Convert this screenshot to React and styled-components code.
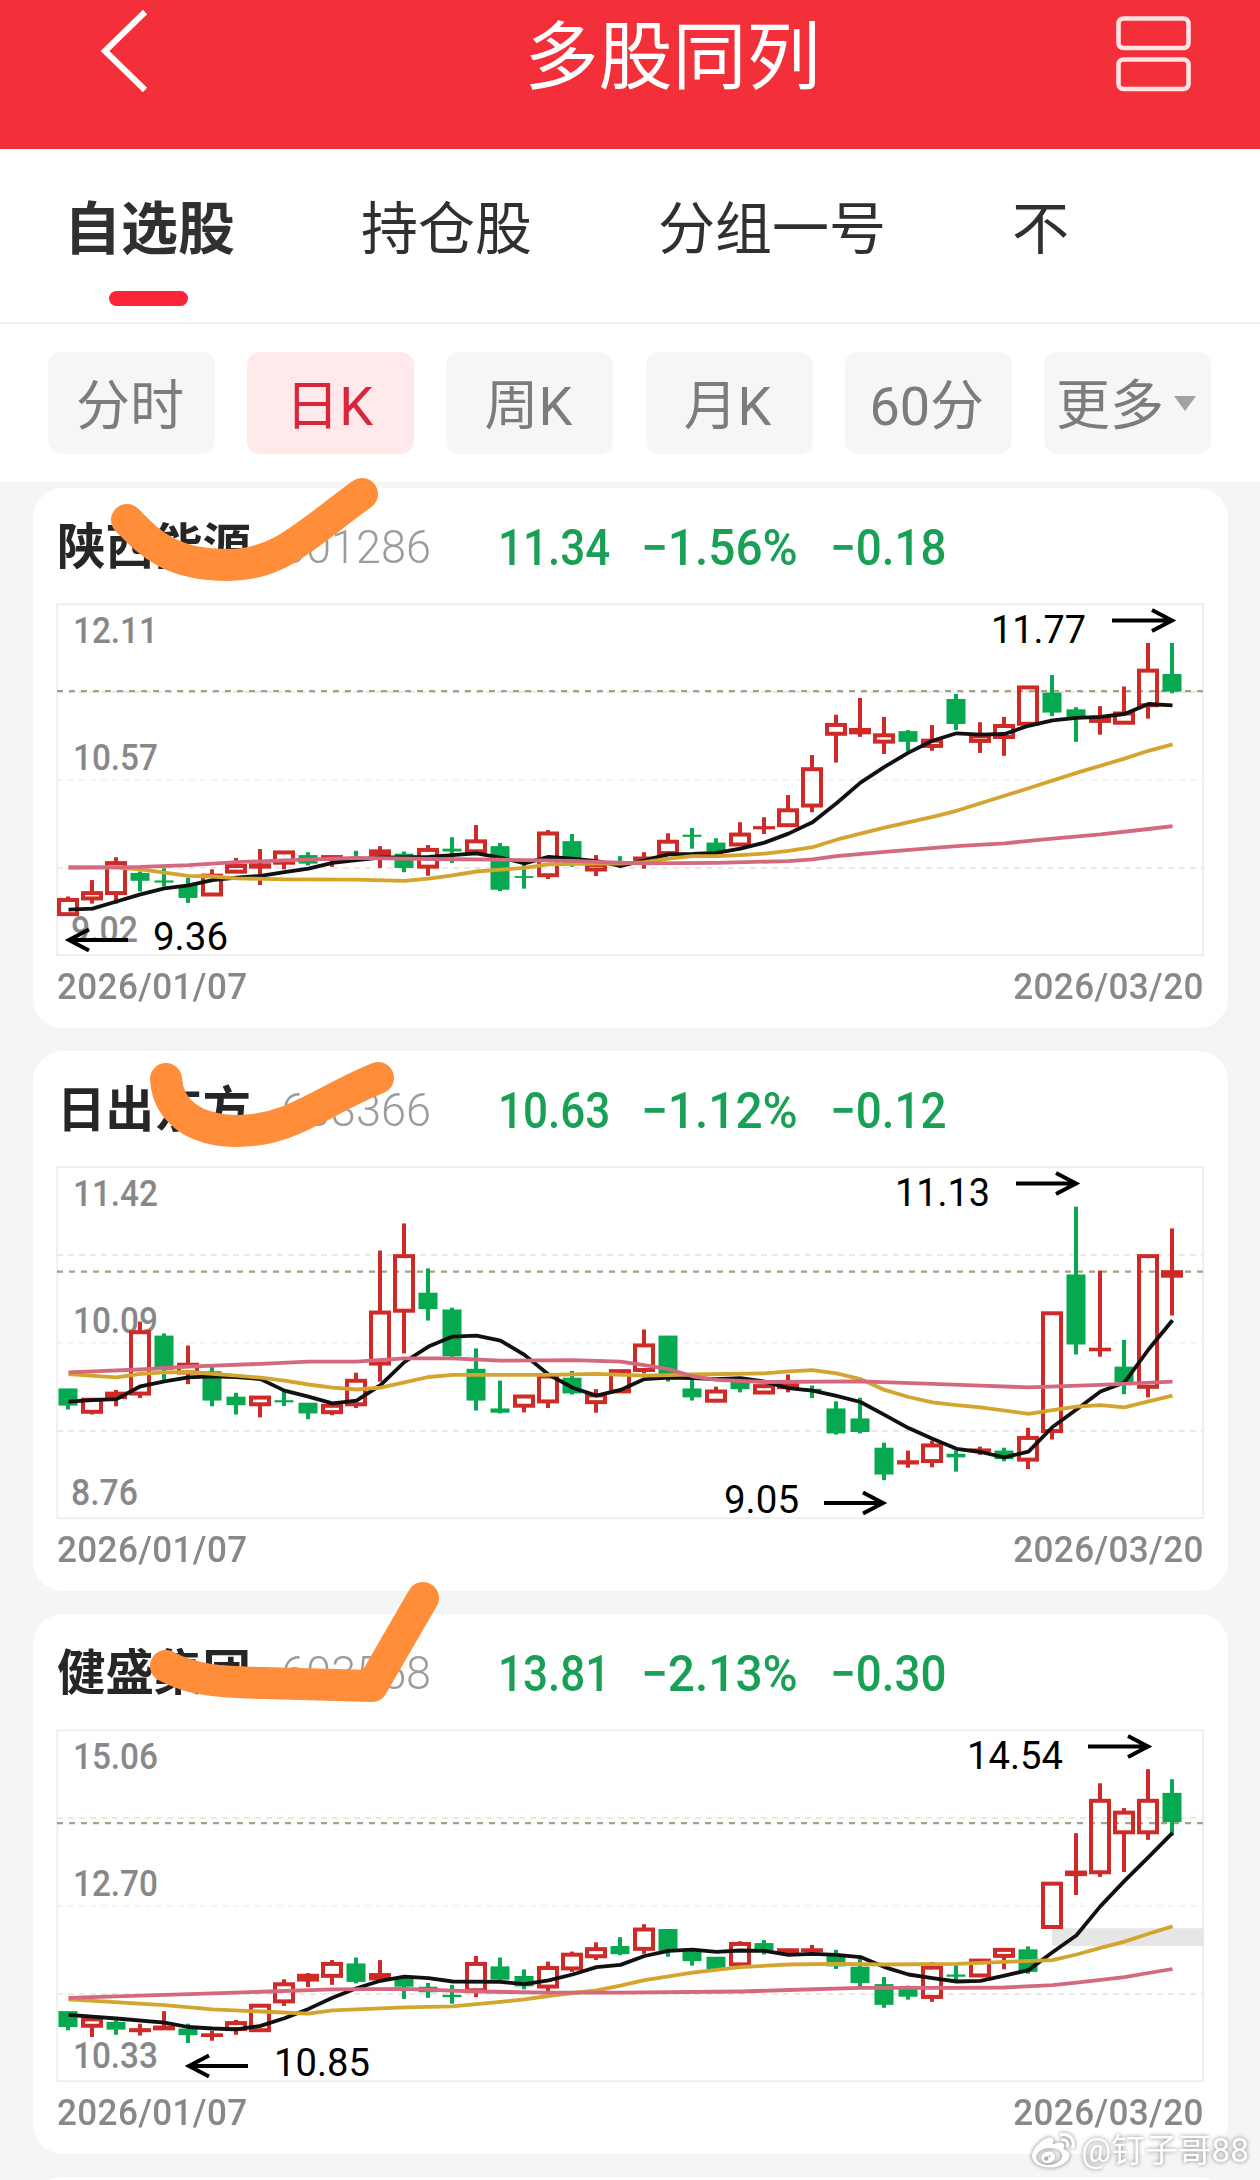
import React from 'react'
import styled, { createGlobalStyle } from 'styled-components';
import { FaWeibo } from 'react-icons/fa';

const TABS = ['自选股', '持仓股', '分组一号', '不'];
const PERIODS = ['分时', '日K', '周K', '月K', '60分', '更多'];

// candles: [u(up) / d(down), body top, body bottom, high, low]
// averages: [day index, value]
const STOCKS = [
  {
    name: '陕西能源', code: '001286', price: '11.34', rate: '−1.56%', diff: '−0.18',
    base: 347, unit: 2.8, last: 591,
    axis: ['12.11', '10.57', '9.02'],
    scribble: 'M94 31C115 52 135 76 195 76C246 76 270 48 329 5',
    marks: [
      { text: '11.77', x: 934, y: 39, w: 95, from: 1055, to: 1115, ay: 16.5 },
      { text: '9.36', x: 96, y: 346, w: 75, from: 71, to: 12, ay: 336 },
    ],
    candles: [
      ['u', 1170, 1221, 1166, 1221], ['u', 1151, 1177, 1120, 1186], ['u', 1067, 1162, 1056, 1186],
      ['d', 1100, 1122, 1096, 1152], ['d', 1121, 1127, 1087, 1138], ['d', 1134, 1170, 1113, 1184],
      ['u', 1102, 1166, 1090, 1166], ['u', 1075, 1102, 1058, 1102], ['u', 1073, 1088, 1033, 1134],
      ['u', 1037, 1077, 1037, 1090], ['d', 1050, 1074, 1042, 1079], ['u', 1050, 1066, 1050, 1083],
      ['d', 1055, 1059, 1038, 1062], ['u', 1034, 1056, 1025, 1086], ['d', 1046, 1086, 1040, 1098],
      ['u', 1030, 1088, 1022, 1108], ['d', 1032, 1040, 1000, 1072], ['u', 1006, 1045, 966, 1050],
      ['d', 1025, 1147, 1016, 1151], ['d', 1109, 1114, 1077, 1144], ['u', 984, 1112, 980, 1117],
      ['d', 1011, 1078, 991, 1083], ['u', 1072, 1096, 1050, 1109], ['d', 1068, 1074, 1053, 1086],
      ['u', 1054, 1066, 1042, 1088], ['u', 1007, 1050, 989, 1050], ['d', 993, 999, 974, 1032],
      ['d', 1015, 1040, 1003, 1046], ['u', 987, 1026, 958, 1026], ['u', 969, 978, 944, 991],
      ['u', 919, 972, 882, 972], ['u', 804, 917, 770, 930], ['u', 680, 716, 657, 791],
      ['u', 694, 712, 610, 719], ['u', 709, 738, 663, 767], ['d', 703, 733, 700, 760],
      ['u', 724, 750, 686, 758], ['d', 613, 683, 599, 700], ['u', 712, 736, 678, 764],
      ['u', 683, 725, 663, 772], ['u', 575, 688, 575, 688], ['d', 595, 651, 546, 661],
      ['d', 642, 668, 636, 733], ['u', 662, 680, 633, 713], ['u', 648, 685, 578, 685],
      ['u', 528, 636, 456, 668], ['d', 543, 592, 456, 597],
    ],
    short: [[0, 1203], [1, 1200], [2, 1180], [3, 1160], [4, 1143], [5, 1135], [6, 1120], [7, 1113], [8, 1108], [9, 1098], [10, 1088], [11, 1072], [12, 1064], [13, 1057], [15, 1055], [16, 1050], [17, 1045], [18, 1057], [19, 1073], [20, 1055], [21, 1060], [22, 1067], [23, 1080], [24, 1065], [25, 1048], [26, 1047], [27, 1044], [28, 1032], [29, 1015], [30, 990], [31, 958], [32, 905], [33, 847], [34, 803], [35, 763], [36, 730], [37, 709], [38, 713], [39, 711], [40, 688], [41, 673], [42, 666], [43, 663], [44, 655], [45, 627], [46, 631]],
    mid: [[0, 1083], [2, 1085], [3, 1090], [4, 1099], [5, 1108], [6, 1110], [7, 1115], [9, 1118], [12, 1119], [14, 1122], [15, 1116], [16, 1107], [17, 1096], [18, 1091], [19, 1086], [20, 1076], [22, 1074], [23, 1074], [24, 1070], [25, 1060], [26, 1053], [27, 1053], [28, 1050], [29, 1046], [30, 1038], [31, 1028], [32, 1007], [34, 973], [36, 943], [37, 926], [39, 884], [40, 863], [42, 820], [44, 780], [45, 758], [46, 740]],
    long: [[0, 1086], [3, 1083], [5, 1078], [7, 1070], [9, 1065], [12, 1058], [15, 1061], [18, 1063], [21, 1066], [22, 1069], [24, 1073], [27, 1072], [30, 1067], [31, 1062], [32, 1053], [34, 1041], [37, 1025], [39, 1017], [41, 1004], [43, 992], [45, 977], [46, 969]],
  },
  {
    name: '日出东方', code: '603366', price: '10.63', rate: '−1.12%', diff: '−0.12',
    base: 354, unit: 2.8, last: 647,
    axis: ['11.42', '10.09', '8.76'],
    scribble: 'M133 27C135 58 160 79 205 79C258 79 290 48 345 26',
    marks: [
      { text: '11.13', x: 838, y: 39, w: 95, from: 959, to: 1019, ay: 16.5 },
      { text: '9.05', x: 667, y: 346, w: 75, from: 767, to: 826, ay: 336 },
    ],
    candles: [
      ['d', 974, 1022, 974, 1033], ['u', 1000, 1045, 1000, 1047], ['u', 983, 1004, 978, 1024],
      ['u', 811, 994, 787, 1001], ['d', 826, 922, 820, 950], ['u', 902, 935, 854, 962],
      ['d', 926, 1008, 912, 1024], ['d', 997, 1021, 986, 1047], ['u', 994, 1024, 994, 1055],
      ['d', 1007, 1013, 981, 1023], ['d', 1014, 1044, 1014, 1060], ['u', 1017, 1046, 1017, 1049],
      ['u', 947, 1024, 930, 1029], ['u', 756, 910, 588, 955], ['u', 598, 762, 512, 876],
      ['d', 706, 752, 638, 784], ['d', 753, 884, 748, 890], ['d', 919, 1008, 862, 1036],
      ['d', 1030, 1042, 952, 1044], ['u', 991, 1028, 991, 1041], ['u', 935, 1016, 932, 1029],
      ['d', 944, 988, 925, 991], ['u', 988, 1018, 976, 1042], ['u', 920, 988, 920, 988],
      ['u', 848, 928, 809, 932], ['d', 826, 948, 826, 955], ['d', 974, 999, 948, 1008],
      ['u', 977, 1014, 969, 1014], ['d', 956, 976, 950, 985], ['u', 962, 991, 962, 991],
      ['u', 958, 976, 935, 985], ['d', 975, 982, 966, 1001], ['d', 1030, 1100, 1010, 1103],
      ['d', 1058, 1096, 1000, 1100], ['d', 1140, 1215, 1126, 1231], ['u', 1175, 1187, 1148, 1196],
      ['u', 1128, 1183, 1120, 1195], ['d', 1157, 1167, 1148, 1207], ['u', 1142, 1152, 1137, 1160],
      ['d', 1148, 1172, 1140, 1178], ['u', 1107, 1179, 1084, 1200], ['u', 758, 1099, 758, 1117],
      ['d', 655, 851, 465, 879], ['u', 860, 870, 644, 885], ['d', 913, 957, 838, 990],
      ['u', 598, 975, 598, 999], ['u', 643, 664, 526, 770],
    ],
    short: [[0, 1011], [1, 1007], [2, 1004], [3, 968], [4, 954], [5, 943], [6, 940], [7, 942], [8, 948], [9, 980], [10, 997], [11, 1016], [12, 1008], [13, 965], [14, 900], [15, 857], [16, 829], [17, 826], [18, 840], [19, 880], [20, 935], [21, 972], [22, 994], [23, 978], [24, 948], [25, 944], [26, 945], [27, 948], [28, 945], [29, 955], [30, 973], [31, 980], [32, 995], [33, 1012], [34, 1048], [35, 1085], [36, 1115], [37, 1143], [38, 1152], [39, 1167], [40, 1151], [41, 1082], [42, 1033], [43, 983], [44, 957], [45, 865], [46, 783]],
    mid: [[0, 934], [2, 943], [3, 933], [4, 929], [5, 928], [7, 938], [8, 944], [9, 952], [10, 963], [11, 972], [12, 977], [13, 972], [14, 957], [15, 942], [16, 936], [20, 936], [22, 933], [24, 938], [26, 935], [29, 932], [30, 926], [31, 923], [32, 932], [33, 948], [34, 978], [35, 998], [36, 1013], [37, 1021], [38, 1027], [40, 1045], [41, 1035], [42, 1025], [43, 1021], [44, 1027], [45, 1010], [46, 994]],
    long: [[0, 929], [3, 921], [5, 913], [8, 905], [10, 899], [12, 899], [14, 890], [16, 890], [18, 896], [21, 895], [23, 899], [24, 909], [25, 920], [26, 940], [27, 950], [29, 956], [33, 954], [36, 961], [38, 966], [40, 971], [43, 964], [46, 955]],
  },
  {
    name: '健盛集团', code: '603558', price: '13.81', rate: '−2.13%', diff: '−0.30',
    base: 351, unit: 2.7034, last: 603,
    axis: ['15.06', '12.70', '10.33'],
    scribble: 'M133 51C160 66 190 67 230 68L339 71L390 -17',
    gap: [995, 887, 935],
    marks: [
      { text: '14.54', x: 910, y: 39, w: 96, from: 1031, to: 1091, ay: 16.5 },
      { text: '10.85', x: 217, y: 346, w: 96, from: 191, to: 132, ay: 336 },
    ],
    candles: [
      ['d', 1111, 1154, 1111, 1163], ['u', 1128, 1156, 1128, 1181], ['d', 1140, 1161, 1136, 1175],
      ['u', 1157, 1168, 1145, 1177], ['u', 1150, 1163, 1111, 1163], ['d', 1158, 1176, 1145, 1197],
      ['u', 1171, 1181, 1164, 1191], ['u', 1138, 1165, 1135, 1175], ['u', 1091, 1168, 1091, 1168],
      ['u', 1033, 1090, 1025, 1097], ['u', 1010, 1031, 1008, 1046], ['u', 978, 1021, 973, 1040],
      ['d', 982, 1032, 966, 1036], ['u', 1008, 1028, 973, 1033], ['d', 1022, 1045, 1018, 1078],
      ['d', 1045, 1060, 1035, 1075], ['d', 1067, 1073, 1040, 1091], ['u', 978, 1060, 962, 1073],
      ['d', 990, 1026, 966, 1033], ['d', 1016, 1044, 998, 1052], ['u', 989, 1050, 977, 1057],
      ['u', 953, 1001, 950, 1005], ['u', 938, 968, 925, 973], ['d', 935, 957, 911, 960],
      ['u', 885, 948, 876, 956], ['d', 889, 948, 889, 964], ['d', 950, 976, 948, 988],
      ['d', 964, 998, 964, 998], ['u', 924, 990, 922, 990], ['d', 927, 947, 919, 958],
      ['u', 941, 955, 941, 958], ['u', 941, 952, 932, 956], ['d', 960, 990, 945, 997],
      ['d', 991, 1035, 968, 1046], ['d', 1038, 1094, 1019, 1102], ['d', 1051, 1072, 1042, 1080],
      ['u', 988, 1078, 978, 1086], ['d', 1012, 1018, 983, 1032], ['u', 969, 1020, 969, 1020],
      ['u', 940, 967, 940, 998], ['d', 944, 1005, 936, 1010], ['u', 761, 889, 761, 889],
      ['u', 731, 746, 630, 797], ['u', 537, 741, 495, 748], ['u', 569, 633, 562, 735],
      ['u', 537, 633, 457, 648], ['d', 521, 600, 484, 636],
    ],
    short: [[0, 1121], [2, 1131], [4, 1142], [5, 1154], [6, 1158], [7, 1160], [8, 1151], [9, 1130], [10, 1105], [11, 1075], [12, 1049], [13, 1029], [14, 1018], [15, 1022], [16, 1031], [18, 1032], [19, 1038], [20, 1028], [21, 1012], [22, 992], [23, 986], [24, 962], [25, 948], [26, 945], [27, 951], [28, 947], [29, 948], [30, 959], [31, 956], [32, 959], [33, 965], [34, 992], [35, 1012], [36, 1022], [37, 1031], [38, 1029], [39, 1015], [40, 1000], [41, 952], [42, 906], [43, 827], [44, 759], [45, 695], [46, 629]],
    mid: [[0, 1079], [4, 1095], [6, 1106], [8, 1112], [10, 1118], [11, 1109], [14, 1101], [16, 1098], [18, 1086], [19, 1079], [20, 1070], [21, 1062], [22, 1055], [23, 1042], [24, 1027], [26, 1007], [28, 992], [30, 985], [32, 983], [34, 985], [37, 983], [39, 978], [41, 973], [42, 958], [43, 940], [44, 923], [45, 902], [46, 882]],
    long: [[0, 1075], [3, 1069], [7, 1061], [11, 1052], [14, 1051], [17, 1058], [20, 1061], [23, 1061], [28, 1058], [30, 1054], [33, 1048], [37, 1048], [39, 1047], [41, 1041], [42, 1034], [44, 1019], [45, 1008], [46, 997]],
  },
];

const STEP = 24;
const W = 1147;
const H = 352;

function Candle({ x, data, y }) {
  const [kind, top, bottom, high, low] = data;
  const t = y(top);
  const b = y(bottom);
  const h = b - t;
  const up = kind === 'u';
  const color = up ? '#cf2a27' : '#06a94f';
  const hollow = up && h > 8.4;
  return (
    <g>
      {high < top && <line x1={x} x2={x} y1={y(high)} y2={t + 1} stroke={color} strokeWidth="4" />}
      {low > bottom && <line x1={x} x2={x} y1={b - 1} y2={y(low)} stroke={color} strokeWidth="4" />}
      {hollow
        ? <rect x={x - 9} y={t + 2} width="18" height={h - 4} fill="none" stroke={color} strokeWidth="4" />
        : <rect x={x - (up ? 11 : 9.5)} y={t} width={up ? 22 : 19} height={h} fill={color} />}
    </g>
  )
}

function Mark({ text, x, y, w, from, to, ay }) {
  const back = to > from ? -20 : 20;
  return (
    <g>
      <MarkText x={x} y={y} textLength={w} lengthAdjust="spacingAndGlyphs">{text}</MarkText>
      <path d={`M${from} ${ay}H${to}M${to + back} ${ay - 10.5}L${to} ${ay}L${to + back} ${ay + 10.5}`} fill="none" stroke="#000" strokeWidth="4" />
    </g>
  )
}

function Chart({ stock }) {
  const { base, unit, candles, axis, last, gap } = stock;
  const y = v => (v - base) / unit;
  const line = list => list.map(([i, v]) => `${11.5 + i * STEP},${y(v).toFixed(1)}`).join(' ');
  return (
    <ChartSvg viewBox={`0 0 ${W} ${H}`}>
      {[88, 176, 264].map(g => (
        <line key={g} x1="0" x2={W} y1={g} y2={g} stroke={g === 176 ? '#f1f1f1' : '#e2e2e2'} strokeWidth="1.5" strokeDasharray="6 5" />
      ))}
      <rect x="0.25" y="0.25" width={W - 1} height={H - 1} fill="none" stroke="#ededed" strokeWidth="1.8" />
      {gap && <rect x={gap[0]} y={y(gap[1])} width={W - gap[0]} height={y(gap[2]) - y(gap[1])} fill="#e6e6e6" />}
      <AxisText x="16" y="39" textLength="85" lengthAdjust="spacingAndGlyphs">{axis[0]}</AxisText>
      <AxisText x="16" y="166" textLength="85" lengthAdjust="spacingAndGlyphs">{axis[1]}</AxisText>
      <AxisText x={axis[2].length === 5 ? 16 : 14} y="338" textLength={axis[2].length === 5 ? 85 : 67} lengthAdjust="spacingAndGlyphs">{axis[2]}</AxisText>
      <line x1="0" x2={W} y1={y(last)} y2={y(last)} stroke="#a3a287" strokeWidth="2.2" strokeDasharray="6 6" />
      {candles.map((c, i) => <Candle key={i} x={11 + i * STEP} data={c} y={y} />)}
      <Average points={line(stock.short)} stroke="#111" />
      <Average points={line(stock.mid)} stroke="#d3a52f" />
      <Average points={line(stock.long)} stroke="#d4687f" />
      {stock.marks.map(m => <Mark key={m.text} {...m} />)}
    </ChartSvg>
  )
}

function StockCard({ stock }) {
  return (
    <Card>
      <CardHead>
        <Name>{stock.name}</Name>
        <Code>{stock.code}</Code>
        <Quote $squeeze={0.88}>{stock.price}</Quote>
        <Quote $squeeze={0.955}>{stock.rate}</Quote>
        <Quote $squeeze={0.915}>{stock.diff}</Quote>
      </CardHead>
      <Chart stock={stock} />
      <Dates>
        <DateText>2026/01/07</DateText>
        <DateText $right>2026/03/20</DateText>
      </Dates>
      <Scribble viewBox="0 0 460 120">
        <path d={stock.scribble} fill="none" stroke="#ff8d3a" strokeWidth="32" strokeLinecap="round" strokeLinejoin="round" />
      </Scribble>
    </Card>
  )
}

export default function App() {
  return (
    <Page>
      <GlobalStyle />
      <Header>
        <BackIcon viewBox="0 0 60 90">
          <path d="M50 6L10 45L50 84" fill="none" stroke="#fff" strokeWidth="6" />
        </BackIcon>
        <Title>多股同列</Title>
        <LayoutIcon viewBox="0 0 76 76">
          <rect x="2.5" y="2.5" width="70" height="29.5" rx="5" />
          <rect x="2.5" y="43.5" width="70" height="29.5" rx="5" />
        </LayoutIcon>
      </Header>
      <Tabs>
        {TABS.map((tab, i) => <Tab key={tab} $active={i === 0}>{tab}</Tab>)}
      </Tabs>
      <Periods>
        {PERIODS.map((p, i) => (
          <Period key={p} $active={i === 1}>
            {p}
            {i === 5 && <Caret />}
          </Period>
        ))}
      </Periods>
      <List>
        {STOCKS.map(s => <StockCard key={s.code} stock={s} />)}
        <Card />
      </List>
      <Watermark>
        <FaWeibo size={43} />
        <span>@钉子哥88</span>
      </Watermark>
    </Page>
  )
}

const GlobalStyle = createGlobalStyle`
    * { box-sizing:border-box; }
    body {
        margin:0;
        background:#f5f5f5;
        font-family:Roboto, "Noto Sans CJK SC", sans-serif;
    }
`
const Page = styled.div`
    position:relative;
    display:flex;
    flex-direction:column;
    width:1260px;
    height:2180px;
    overflow:hidden;
`
const Header = styled.header`
    display:grid;
    grid-template-columns:60px 1fr 76px;
    flex:none;
    height:149px;
    padding:0 67px 0 95px;
    background:#f3303a;
`
const BackIcon = styled.svg`
    width:60px;
    height:90px;
    margin-top:6px;
`
const Title = styled.h1`
    margin:0;
    padding-left:73px;
    font-size:74px;
    font-weight:400;
    line-height:115px;
    text-align:center;
    color:#fff;
`
const LayoutIcon = styled.svg`
    width:76px;
    height:76px;
    margin:16px 0 0 -1px;
    rect {
        fill:none;
        stroke:#ffe2e2;
        stroke-width:4.6;
    }
`
const Tabs = styled.nav`
    display:flex;
    gap:126px;
    flex:none;
    height:175px;
    padding:0 64px;
    border-bottom:2px solid #f2f2f2;
    background:#fff;
`
const Tab = styled.div`
    position:relative;
    font-size:57px;
    line-height:162px;
    white-space:nowrap;
    font-weight:${p => (p.$active ? 700 : 400)};
    color:#303030;
    &:after {
        display:${p => (p.$active ? 'block' : 'none')};
        position:absolute;
        left:45px;
        top:142px;
        width:79px;
        height:15px;
        border-radius:8px;
        background:#fb2438;
        content:'';
    }
`
const Periods = styled.div`
    display:flex;
    justify-content:space-between;
    flex:none;
    height:158px;
    padding:28px 49px 0 48px;
    background:#fff;
`
const Period = styled.div`
    display:flex;
    align-items:center;
    justify-content:center;
    width:167px;
    height:102px;
    padding:0 3px 3px 0;
    border-radius:13px;
    font-size:54px;
    background:${p => (p.$active ? '#ffe9ea' : '#f6f6f6')};
    color:${p => (p.$active ? '#d8273c' : '#7c7c7c')};
`
const Caret = styled.i`
    margin:4px 0 0 10px;
    border:11px solid transparent;
    border-top:15px solid #a2a2a2;
    border-bottom:0;
`
const List = styled.main`
    display:flex;
    flex-direction:column;
    gap:23px;
    padding:6px 32px 0 33px;
`
const Card = styled.section`
    position:relative;
    flex:none;
    height:540px;
    padding:0 24px;
    border-radius:30px;
    background:#fff;
`
const CardHead = styled.div`
    display:grid;
    grid-template-columns:224px 217px 143px 189px auto;
    align-items:center;
    height:116px;
`
const Name = styled.h2`
    margin:0;
    padding-top:3px;
    font-size:48.5px;
    font-weight:700;
    line-height:60px;
    color:#262626;
`
const Code = styled.span`
    font-size:45.5px;
    font-weight:300;
    line-height:60px;
    padding-top:3px;
    color:#9c9c9c;
    transform:scaleX(.99);
    transform-origin:left;
`
const Quote = styled.span`
    font-size:50px;
    font-weight:500;
    line-height:60px;
    padding-top:3px;
    white-space:nowrap;
    color:#1aa056;
    transform:scaleX(${p => p.$squeeze});
    transform-origin:left;
`
const ChartSvg = styled.svg`
    display:block;
    width:1147px;
    height:352px;
    overflow:visible;
`
const AxisText = styled.text`
    font-size:37px;
    font-weight:500;
    fill:#888;
`
const MarkText = styled.text`
    font-size:39px;
    fill:#000;
`
const Average = styled.polyline`
    fill:none;
    stroke-width:3.8;
    stroke-linejoin:round;
`
const Dates = styled.div`
    display:flex;
    justify-content:space-between;
    padding-top:8px;
`
const DateText = styled.span`
    font-size:37.5px;
    font-weight:500;
    line-height:44px;
    letter-spacing:.4px;
    color:#888;
    transform:scaleX(.935);
    transform-origin:${p => (p.$right ? 'right' : 'left')};
`
const Scribble = styled.svg`
    position:absolute;
    left:0;
    top:1px;
    width:460px;
    height:120px;
    overflow:visible;
`
const Watermark = styled.div`
    position:absolute;
    right:11px;
    bottom:7px;
    display:flex;
    align-items:center;
    gap:6px;
    font-size:33.4px;
    line-height:44px;
    color:#fff;
    filter:drop-shadow(0 0 2px rgba(0,0,0,.5));
`
